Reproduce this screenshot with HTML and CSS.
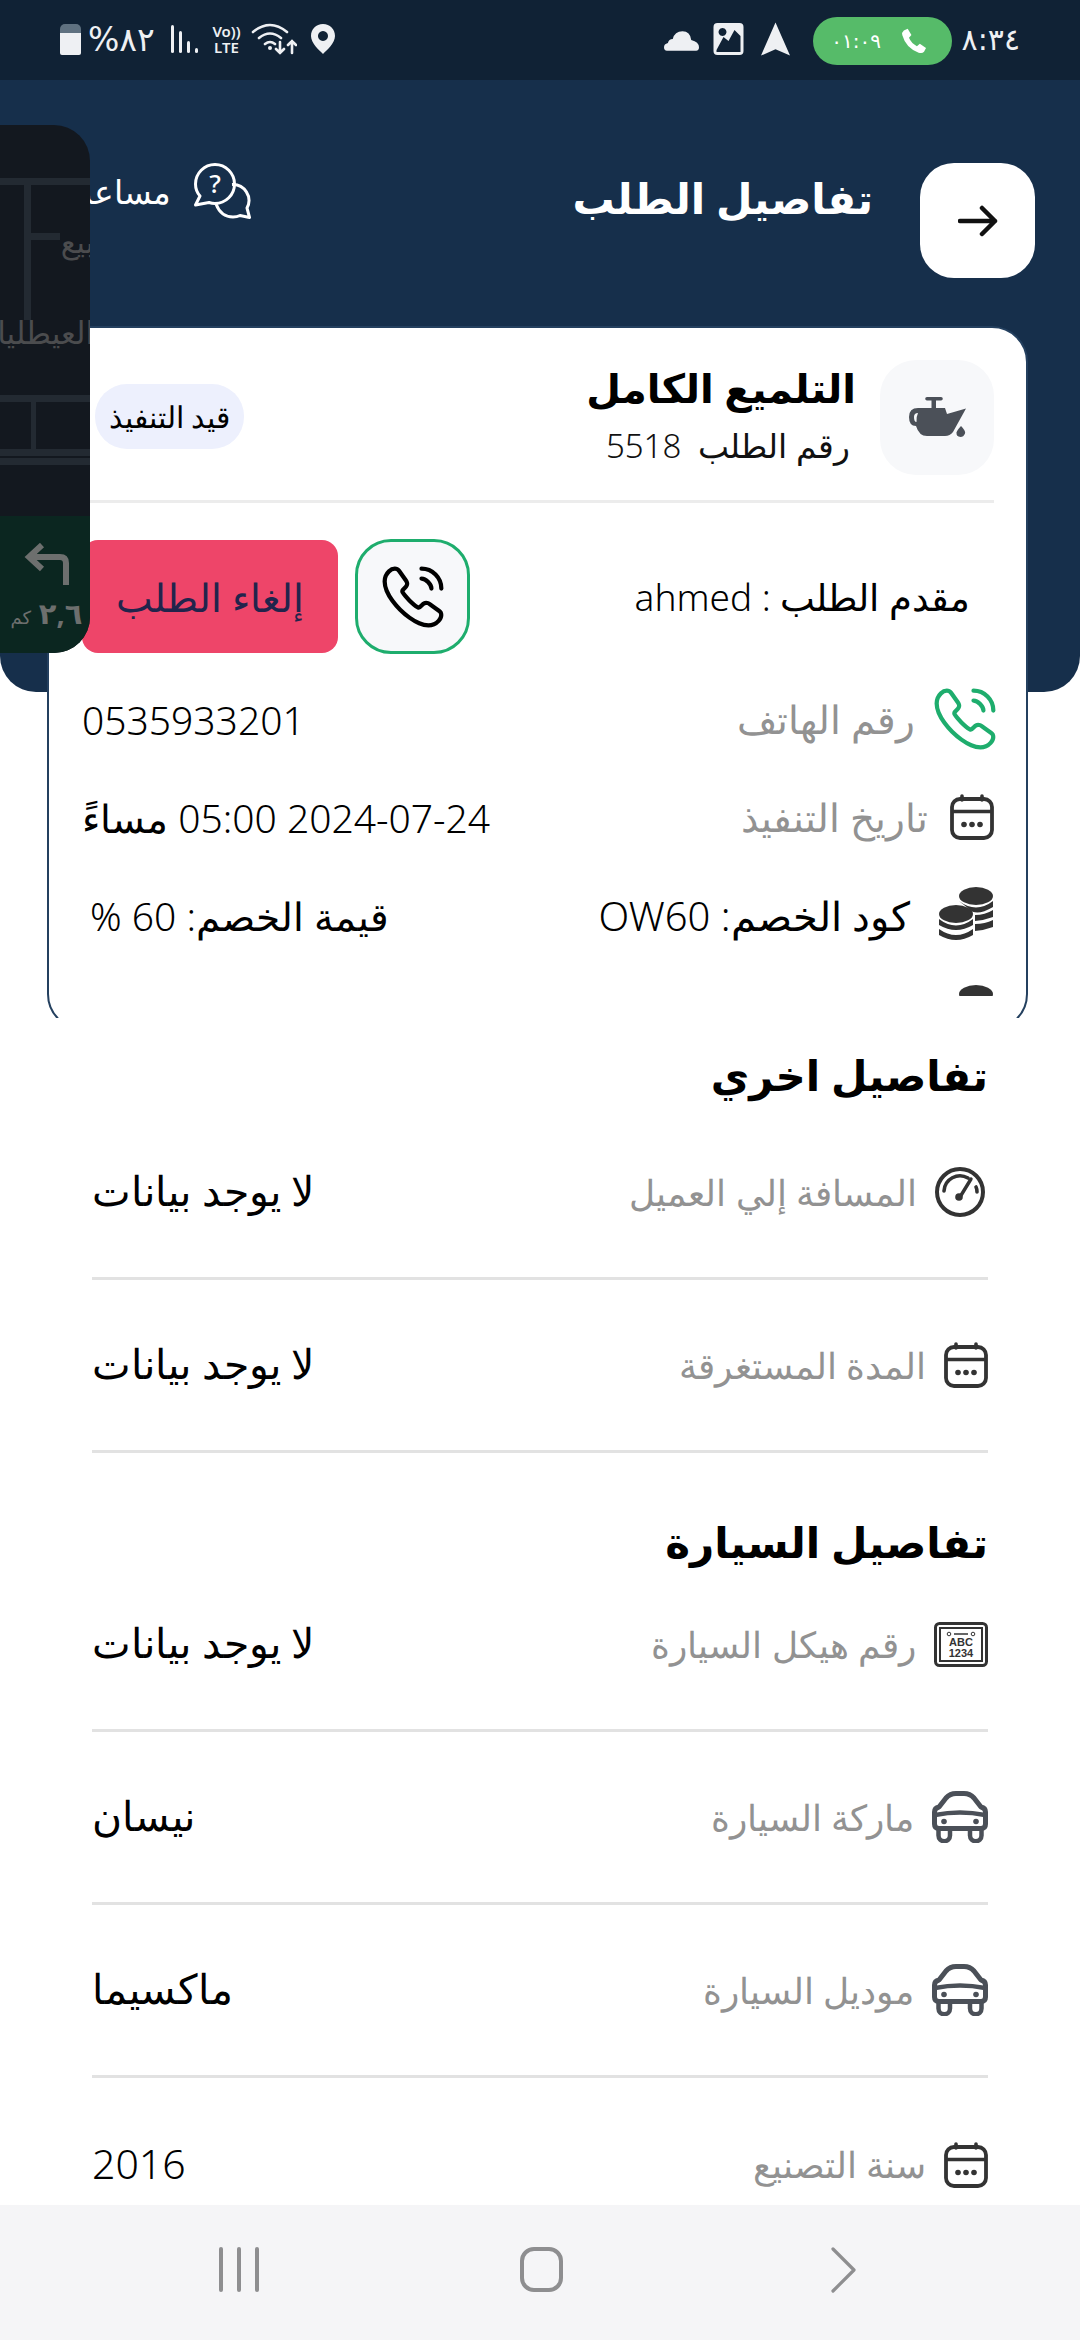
FILE: index.html
```html
<!DOCTYPE html>
<html lang="ar" dir="rtl">
<head>
<meta charset="utf-8">
<title>تفاصيل الطلب</title>
<link rel="stylesheet" href="styles.css">
</head>
<body>
<svg class="defs" width="0" height="0" aria-hidden="true">
  <defs>
    <symbol id="call" viewBox="0 0 24 24">
      <path fill="none" stroke="currentColor" stroke-width="1.5" stroke-linecap="round" stroke-linejoin="round" d="M21.97 18.33c0 .36-.08.73-.25 1.09-.17.36-.39.7-.68 1.02-.49.54-1.03.93-1.64 1.18-.6.25-1.25.38-1.95.38-1.02 0-2.11-.24-3.26-.73s-2.3-1.15-3.44-1.98a28.75 28.75 0 0 1-3.28-2.8 28.414 28.414 0 0 1-2.79-3.27c-.82-1.14-1.48-2.28-1.96-3.41C2.24 8.67 2 7.58 2 6.54c0-.68.12-1.33.36-1.93.24-.61.62-1.17 1.15-1.67C4.15 2.31 4.85 2 5.59 2c.28 0 .56.06.81.18.26.12.49.3.67.56l2.32 3.27c.18.25.31.48.4.7.09.21.14.42.14.61 0 .24-.07.48-.21.71-.13.23-.32.47-.56.71l-.76.79c-.11.11-.16.24-.16.4 0 .08.01.15.03.23.03.08.06.14.08.2.18.33.49.76.93 1.28.45.52.93 1.05 1.45 1.58.54.53 1.06 1.02 1.59 1.47.52.44.95.74 1.29.92.05.02.11.05.18.08.08.03.16.04.25.04.17 0 .3-.06.41-.17l.76-.75c.25-.25.49-.44.72-.56.23-.14.46-.21.71-.21.19 0 .39.04.61.13.22.09.45.22.7.39l3.31 2.35c.26.18.44.39.55.64.1.25.16.5.16.78Z"/>
      <path fill="none" stroke="currentColor" stroke-width="1.5" stroke-linecap="round" d="M18.5 9c0-.6-.47-1.52-1.17-2.27-.64-.69-1.49-1.23-2.33-1.23M22 9c0-3.87-3.13-7-7-7"/>
    </symbol>
    <symbol id="cal" viewBox="0 0 44 46">
      <rect x="2" y="5" width="40" height="39" rx="8" fill="none" stroke="currentColor" stroke-width="3.800"/>
      <path d="M2 17.500h40" stroke="currentColor" stroke-width="3.400"/>
      <path d="M12 2v4M32 2v4" stroke="currentColor" stroke-width="3.600" stroke-linecap="round"/>
      <circle cx="14" cy="30.500" r="2.800" fill="currentColor"/><circle cx="22" cy="30.500" r="2.800" fill="currentColor"/><circle cx="30" cy="30.500" r="2.800" fill="currentColor"/>
    </symbol>
    <symbol id="car" viewBox="0 0 56 52">
      <path fill="none" stroke="currentColor" stroke-width="5" stroke-linejoin="round" d="M7 16 14 7Q18 2.500 24 2.500H32Q38 2.500 42 7L49 16Q53.500 17 53.500 21V33Q53.500 37.500 49 37.500H7Q2.500 37.500 2.500 33V21Q2.500 17 7 16Z"/>
      <path fill="none" stroke="currentColor" stroke-width="4.500" d="M3 24Q28 19 53 24"/>
      <path fill="none" stroke="currentColor" stroke-width="4.500" d="M6.500 38v6.500a5.750 5.750 0 0 0 11.500 0V38M38 38v6.500a5.750 5.750 0 0 0 11.500 0V38"/>
      <circle cx="12" cy="30.500" r="2.800" fill="currentColor"/><circle cx="44" cy="30.500" r="2.800" fill="currentColor"/>
    </symbol>
  </defs>
</svg>

<div class="screen">
  <div class="status">
    <div class="status-side">
      <span class="clock">٨:٣٤</span>
      <span class="call-pill">
        <svg class="pill-phone" viewBox="0 0 24 24"><path fill="#fff" d="M6.600 1.500 9.800 6.900 7.700 9.300Q9.800 14.300 14.500 16.400L17 14.300 22.300 18 20.600 21.300Q19 23 16 22 5 17.800 2 7 1.400 4.500 3.300 3Z"/></svg>
        <span class="pill-time">٠١:٠٩</span>
      </span>
      <svg class="st-nav" viewBox="0 0 28 32"><path fill="#eef0f3" d="M14 0 28 32 14 26 0 32Z"/></svg>
      <svg class="st-img" viewBox="0 0 30 32"><path fill="#eef0f3" fill-rule="evenodd" d="M4 0H26Q30 0 30 4V28Q30 32 26 32H4Q0 32 0 28V4Q0 0 4 0ZM3 27V29H27V13L21 7 15 18 10 14ZM9 5a4 4 0 1 0 .01 0Z"/></svg>
      <svg class="st-cloud" viewBox="0 0 36 20"><path fill="#eef0f3" d="M3 20Q0 20 0 16.500 0 13 4 12 5 8 9 8 11 0 19 0 27 0 28 9 36 11 36 16.500 36 20 33 20Z"/></svg>
    </div>
    <div class="status-side">
      <svg class="st-pin" viewBox="0 0 24 30"><path fill="#eef0f3" fill-rule="evenodd" d="M12 0C5 0 0 5 0 12c0 7 8 14 12 18 4-4 12-11 12-18C24 5 19 0 12 0Zm0 7a5 5 0 1 1-.01 0Z"/></svg>
      <svg class="st-wifi" viewBox="0 0 46 34"><g fill="none" stroke="#eef0f3" stroke-width="2.600" stroke-linecap="round"><path d="M2 10Q19-4 36 10M8 16Q19 7 30 16M14 22Q19 18 24 22"/><path d="M29 20v11M25 27l4 4 4-4M41 31V19M37 23l4-4 4 4"/></g><circle cx="19" cy="26" r="2" fill="#eef0f3"/></svg>
      <span class="volte"><span>Vo))</span><span>LTE</span></span>
      <span class="bars"><i class="b1"></i><i class="b2"></i><i class="b3"></i><i class="b4"></i></span>
      <span class="pct">%٨٢</span>
      <span class="battery"></span>
    </div>
  </div>

  <header class="header">
    <div class="head-start">
      <button class="back" aria-label="رجوع">
        <svg viewBox="0 0 40 40"><path fill="none" stroke="#111" stroke-width="4.500" stroke-linecap="round" stroke-linejoin="round" d="M2 20H37M24 7 37 20 24 33"/></svg>
      </button>
      <h1 class="title">تفاصيل الطلب</h1>
    </div>
    <div class="help">
      <svg class="help-icon" viewBox="0 0 57 56"><g fill="none" stroke="#fff" stroke-width="3" stroke-linejoin="round"><path d="M21 1.500A19.500 19.500 0 0 1 21 40.500Q18 40.500 15 39.500L1.500 42 6 33Q1.500 28 1.500 21A19.500 19.500 0 0 1 21 1.500Z"/><path d="M38 21.500A16 16 0 0 1 53 45L55.500 54.500 46 52.500Q43 54 39 54 27 54 22 41"/></g><text x="21" y="30" text-anchor="middle" class="q">?</text></svg>
      <span class="help-text">مساعدة</span>
    </div>
  </header>

  <section class="card">
    <div class="card-top">
      <div class="oil-box">
        <svg viewBox="0 0 57 41"><g fill="#4b5058"><path d="M18 0H32a1.800 1.800 0 0 1 0 3.600H27V12H22.500V3.600H18A1.800 1.800 0 0 1 18 0Z"/><path fill-rule="evenodd" d="M9 11H36L38 17 57 11.500 44 35Q41 39 36 39H18Q10 39 7 29 0 29 0 20 0 11 9 11ZM9 16Q5 16 5 20 5 25 7.500 25 7 20 9 16Z"/><path d="M52 29Q57 34 56 36.500 54.500 40 51.500 40 47 39.500 47.500 35.500 48 33 52 29Z"/></g></svg>
      </div>
      <div class="top-text">
        <div class="service">التلميع الكامل</div>
        <div class="order-no">رقم الطلب&nbsp; 5518</div>
      </div>
      <span class="badge">قيد التنفيذ</span>
    </div>
    <div class="applicant">
      <span class="applicant-name">مقدم الطلب : ahmed</span>
      <div class="actions">
        <button class="call-btn" aria-label="اتصال"><svg><use href="#call"/></svg></button>
        <button class="cancel">إلغاء الطلب</button>
      </div>
    </div>
    <div class="info">
      <svg class="i-call"><use href="#call"/></svg>
      <span class="lbl">رقم الهاتف</span>
      <span class="val">0535933201</span>
    </div>
    <div class="info">
      <svg class="i-cal"><use href="#cal"/></svg>
      <span class="lbl">تاريخ التنفيذ</span>
      <span class="val">2024-07-24 05:00 مساءً</span>
    </div>
    <div class="info">
      <svg class="i-coins" viewBox="0 0 54 56"><g fill="#333"><ellipse cx="37" cy="9" rx="17" ry="9"/><path d="M20 14Q37 27 54 14V20Q37 30 30 22ZM36 28Q46 28 54 23V30Q46 33 36 34ZM36 37Q46 37 54 33V40Q46 43 36 44Z"/><ellipse cx="17" cy="27" rx="17" ry="9"/><path d="M0 32Q17 45 34 32V38Q17 48 0 38ZM0 42Q17 54 34 42V48Q17 58 0 48Z"/></g></svg>
      <span class="lbl dark">كود الخصم: OW60</span>
      <span class="val discount">قيمة الخصم: 60 %</span>
    </div>
    <div class="info cut">
      <svg class="i-coins" viewBox="0 0 54 56"><ellipse cx="37" cy="9" rx="17" ry="9" fill="#333"/></svg>
    </div>
  </section>

  <main class="details">
    <h2 class="sec first">تفاصيل اخري</h2>
    <div class="row">
      <svg class="ic gauge" viewBox="0 0 50 50"><g fill="none" stroke="#333" stroke-linecap="round"><circle cx="25" cy="25" r="23" stroke-width="4"/><path stroke-width="3.600" d="M9 24A16 16 0 0 1 33 11M41 20Q42 22 42 25"/><path stroke-width="3.400" d="M25 30 36 12"/></g><circle cx="24" cy="30" r="3.800" fill="#333"/></svg>
      <span class="lbl">المسافة إلي العميل</span><span class="val">لا يوجد بيانات</span>
    </div>
    <div class="row">
      <svg class="ic cal"><use href="#cal"/></svg>
      <span class="lbl">المدة المستغرقة</span><span class="val">لا يوجد بيانات</span>
    </div>
    <h2 class="sec second">تفاصيل السيارة</h2>
    <div class="row">
      <svg class="ic plate" viewBox="0 0 54 45"><rect x="1.500" y="1.500" width="51" height="42" rx="4" fill="none" stroke="#333" stroke-width="3"/><rect x="6" y="6" width="42" height="33" fill="none" stroke="#333" stroke-width="2"/><circle cx="15" cy="12" r="1.800" fill="none" stroke="#333"/><circle cx="39" cy="12" r="1.800" fill="none" stroke="#333"/><path d="M20 12H34" stroke="#333" stroke-width="1.500"/><text x="27" y="24" class="plate-t">ABC</text><text x="27" y="35" class="plate-t">1234</text></svg>
      <span class="lbl">رقم هيكل السيارة</span><span class="val">لا يوجد بيانات</span>
    </div>
    <div class="row">
      <svg class="ic car"><use href="#car"/></svg>
      <span class="lbl">ماركة السيارة</span><span class="val">نيسان</span>
    </div>
    <div class="row">
      <svg class="ic car"><use href="#car"/></svg>
      <span class="lbl">موديل السيارة</span><span class="val">ماكسيما</span>
    </div>
    <div class="row">
      <svg class="ic cal"><use href="#cal"/></svg>
      <span class="lbl">سنة التصنيع</span><span class="val">2016</span>
    </div>
  </main>

  <nav class="navbar">
    <svg class="nv-back" viewBox="0 0 25 46"><path fill="none" stroke="#8e8e90" stroke-width="3.200" stroke-linecap="round" stroke-linejoin="round" d="M2 2 23 23 2 44"/></svg>
    <span class="nv-home"></span>
    <span class="nv-recent"><i></i><i></i><i></i></span>
  </nav>

  <aside class="pip">
    <div class="map">
      <i class="road h1"></i><i class="road v1"></i><i class="road h2"></i><i class="road h3"></i><i class="road h4"></i><i class="road h5"></i><i class="road v2"></i>
      <span class="map-a">بيع</span>
      <span class="map-b">العيطليات</span>
    </div>
    <div class="turn">
      <svg viewBox="0 0 46 42"><path fill="none" stroke="#6d6f6e" stroke-width="6" d="M42 42V20Q42 14 36 14H6M18 2 5 14 18 26"/></svg>
      <div class="dist"><span>٢,٦</span> <span class="km">كم</span></div>
    </div>
  </aside>
</div>
</body>
</html>
```
FILE: styles.css
```css
* { box-sizing: border-box; }
html, body { margin: 0; padding: 0; }
body { font-family: "Noto Sans", "DejaVu Sans", sans-serif; background: #fff; color: #000; }
.defs { position: absolute; }
.screen { position: relative; width: 1080px; height: 2340px; overflow: hidden; display: flex; flex-direction: column; background: #fff; }

/* status bar */
.status { height: 80px; flex: none; background: #102235; display: flex; justify-content: space-between; align-items: center; padding: 0 60px 2px 60px; color: #eef0f3; }
.status-side { display: flex; align-items: center; }
.clock { font-size: 30px; width: 68px; text-align: start; font-family: "DejaVu Sans", sans-serif; }
.call-pill { width: 139px; height: 48px; margin-top: 4px; background: #56bb69; border-radius: 24px; display: flex; align-items: center; gap: 19px; padding-right: 24px; }
.pill-phone { width: 28px; height: 28px; flex: none; }
.pill-time { font-size: 20px; color: #fff; font-family: "DejaVu Sans", sans-serif; }
.st-nav { width: 29px; height: 34px; margin-right: 23px; }
.st-img { width: 31px; height: 32px; margin-right: 17px; }
.st-cloud { width: 35px; height: 20px; margin-right: 14px; margin-top: 4px; }
.st-pin { width: 24px; height: 30px; margin-right: 4px; }
.st-wifi { width: 46px; height: 34px; margin-right: 14px; }
.volte { display: flex; flex-direction: column; align-items: center; width: 31px; margin-right: 9px; font: 600 15px/16px "Noto Sans", sans-serif; direction: ltr; }
.bars { display: flex; align-items: flex-end; gap: 5px; height: 28px; width: 27px; margin-right: 13px; direction: ltr; }
.bars i { width: 3px; background: #eef0f3; border-radius: 2px; display: block; }
.b1 { height: 28px; } .b2 { height: 22px; } .b3 { height: 12px; } .b4 { height: 5px; }
.pct { font-size: 33px; width: 69px; margin-right: 14px; font-family: "DejaVu Sans", sans-serif; direction: ltr; white-space: nowrap; }
.battery { width: 21px; height: 31px; margin-right: 7px; border-radius: 5px 5px 2px 2px; background: linear-gradient(#5f7180 0 9px, #eef0f3 9px); }

/* header */
.header { height: 612px; flex: none; background: #162f4b; border-radius: 0 0 36px 36px; display: flex; justify-content: flex-start; align-items: flex-start; padding: 83px 45px 0 0; }
.head-start { display: flex; align-items: center; gap: 47px; flex: 0 0 784px; }
.back { width: 115px; height: 115px; border: 0; padding: 0; background: #fff; border-radius: 34px; display: flex; align-items: center; justify-content: center; flex: none; }
.back svg { width: 40px; height: 40px; }
.title { margin: 0; padding-bottom: 46px; font-size: 42px; font-weight: 700; color: #fff; white-space: nowrap; }
.help { display: flex; align-items: center; gap: 23px; flex: none; }
.help-icon { width: 57px; height: 56px; flex: none; }
.q { font: 500 26px "Noto Sans", sans-serif; fill: #fff; }
.help-text { font-size: 33px; color: #fff; white-space: nowrap; font-weight: 300; }

/* order card */
.card { flex: none; margin: -366px 52px -14px 47px; height: 704px; background: #fff; border: 2px solid #24405f; border-radius: 36px; padding: 32px 32px 0 33px; overflow: hidden; position: relative; z-index: 1; clip-path: inset(-2px -2px 12px -2px); }
.card-top { height: 143px; display: flex; align-items: flex-start; border-bottom: 3px solid #ececec; position: relative; }
.oil-box { width: 114px; height: 115px; background: #f7f8fa; border-radius: 36px; display: flex; align-items: center; justify-content: center; flex: none; }
.oil-box svg { width: 57px; height: 41px; }
.top-text { margin-right: 24px; margin-top: 2px; }
.service { font-size: 40px; line-height: 52px; font-weight: 700; }
.order-no { font-size: 33px; line-height: 46px; margin-top: 9px; padding-right: 6px; color: #111; font-weight: 300; }
.badge { position: absolute; left: 13px; top: 24px; width: 149px; height: 65px; background: #edf0fd; border-radius: 32px; display: flex; align-items: center; justify-content: center; font-size: 30px; white-space: nowrap; font-weight: 300; }
.applicant { display: flex; justify-content: space-between; align-items: center; margin-top: 36px; height: 115px; padding-right: 24px; }
.applicant-name { font-size: 37px; font-weight: 300; }
.actions { display: flex; align-items: center; gap: 17px; }
.call-btn { width: 115px; height: 115px; background: #f7f8fa; border: 3px solid #1ead6d; border-radius: 36px; padding: 0; display: flex; align-items: center; justify-content: center; color: #000; }
.call-btn svg { width: 68px; height: 68px; }
.cancel { width: 256px; height: 113px; background: #ee4569; border: 0; border-radius: 16px; font: 300 39px "Noto Sans", "DejaVu Sans", sans-serif; color: #22244c; }
.info { display: flex; align-items: center; height: 98px; position: relative; }
.applicant + .info { margin-top: 16px; }
.info svg { flex: none; }
.i-call { width: 68px; height: 68px; margin: 0 -5px; color: #1ead6d; }
.i-cal { width: 44px; height: 46px; color: #333; }
.i-coins { width: 56px; height: 56px; }
.info .lbl { margin-right: 21px; font-size: 38.5px; }
.info .i-cal + .lbl { margin-right: 22px; }
.info .lbl.dark { margin-right: 28px; font-size: 40px; color: #000; font-weight: 300; }
.info .val { margin-right: auto; font-size: 39px; }
.info .val.discount { margin-left: 8px; }
.info.cut { overflow: hidden; align-items: flex-start; padding-top: 21px; height: 32px; }

.lbl { font-size: 36px; color: #929292; font-weight: 300; }
.val { font-size: 41px; color: #000; font-weight: 300; }

/* details list */
.details { flex: 1; min-height: 0; overflow: hidden; padding: 0 92px; position: relative; }
.sec { margin: 0; font-size: 42px; font-weight: 700; color: #000; }
.sec.first { line-height: 60px; padding: 29px 0 2px; }
.sec.second { line-height: 28px; padding: 75px 0 3px; }
.row { display: flex; align-items: center; height: 173px; border-bottom: 3px solid #e2e2e2; }
.row:last-child { border-bottom: 0; }
.ic { flex: none; }
.ic.gauge { width: 50px; height: 50px; margin-right: 3px; }
.ic.cal { width: 44px; height: 46px; color: #333; }
.ic.car { width: 56px; height: 52px; color: #4b5058; }
.ic.plate { width: 54px; height: 45px; }
.plate-t { font: 700 11px "Liberation Sans", sans-serif; fill: #333; text-anchor: middle; direction: ltr; }
.row .lbl { margin-right: 18px; }
.row .val { margin-right: auto; padding-bottom: 4px; }

/* nav bar */
.navbar { height: 135px; flex: none; background: #f5f5f7; display: flex; align-items: center; justify-content: space-between; padding: 0 224px 6px 219px; direction: ltr; flex-direction: row-reverse; }
.nv-back { width: 25px; height: 46px; }
.nv-home { width: 43px; height: 45px; margin-right: 8px; border: 4px solid #8e8e90; border-radius: 14px; }
.nv-recent { display: flex; gap: 14px; }
.nv-recent i { width: 4px; height: 45px; background: #8e8e90; border-radius: 2px; display: block; }

/* floating mini map */
.pip { position: absolute; left: 0; top: 125px; width: 90px; height: 528px; border-radius: 0 36px 36px 0; overflow: hidden; background: #13181f; z-index: 5; display: flex; flex-direction: column; }
.map { height: 391px; position: relative; overflow: hidden; flex: none; direction: ltr; }
.road { position: absolute; background: #232a32; display: block; }
.road.h1 { left: 0; right: 0; top: 53px; height: 7px; }
.road.v1 { left: 24px; top: 53px; width: 7px; height: 142px; }
.road.h2 { left: 30px; top: 108px; width: 30px; height: 7px; }
.road.h3 { left: 0; right: 0; top: 270px; height: 7px; }
.road.h4 { left: 0; right: 0; top: 324px; height: 7px; }
.road.h5 { left: 0; right: 0; top: 333px; height: 7px; }
.road.v2 { left: 31px; top: 272px; width: 5px; height: 54px; }
.map-a { position: absolute; right: -4px; top: 96px; font-size: 30px; color: #4b4c4e; }
.map-b { position: absolute; right: -4px; top: 186px; font-size: 31px; color: #4b4c4e; white-space: nowrap; }
.turn { flex: 1; background: #0b2620; display: flex; flex-direction: column; align-items: center; padding: 27px 0 0 3px; }
.turn svg { width: 46px; height: 42px; }
.dist { margin-top: 10px; font-size: 29px; font-weight: 700; color: #6d6f6e; white-space: nowrap; line-height: 36px; }
.km { font-size: 18px; font-weight: 400; }
```
